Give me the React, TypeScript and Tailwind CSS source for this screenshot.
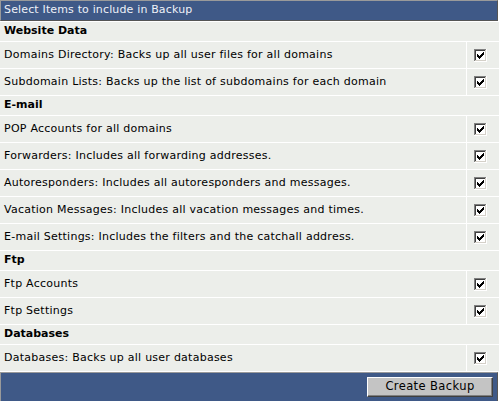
import React from 'react';

type Item = { label: string };
type Section = { title: string; items: Item[] };

const sections: Section[] = [
  {
    title: 'Website Data',
    items: [
      { label: 'Domains Directory: Backs up all user files for all domains' },
      { label: 'Subdomain Lists: Backs up the list of subdomains for each domain' },
    ],
  },
  {
    title: 'E-mail',
    items: [
      { label: 'POP Accounts for all domains' },
      { label: 'Forwarders: Includes all forwarding addresses.' },
      { label: 'Autoresponders: Includes all autoresponders and messages.' },
      { label: 'Vacation Messages: Includes all vacation messages and times.' },
      { label: 'E-mail Settings: Includes the filters and the catchall address.' },
    ],
  },
  {
    title: 'Ftp',
    items: [{ label: 'Ftp Accounts' }, { label: 'Ftp Settings' }],
  },
  {
    title: 'Databases',
    items: [{ label: 'Databases: Backs up all user databases' }],
  },
];

// classic sunken checkbox, 13x13
const CHECK = [
  [6],
  [5, 6],
  [0, 4, 5, 6],
  [0, 1, 3, 4, 5],
  [0, 1, 2, 3, 4],
  [1, 2, 3],
  [2],
];

const CheckBox = () => (
  <svg width="13" height="13" viewBox="0 0 13 13" shapeRendering="crispEdges">
    <rect x="0" y="0" width="13" height="13" fill="#ffffff" />
    <rect x="0" y="0" width="12" height="1" fill="#808080" />
    <rect x="0" y="0" width="1" height="12" fill="#808080" />
    <rect x="1" y="1" width="10" height="1" fill="#404040" />
    <rect x="1" y="1" width="1" height="10" fill="#404040" />
    <rect x="1" y="11" width="11" height="1" fill="#d4d0c8" />
    <rect x="11" y="1" width="1" height="11" fill="#d4d0c8" />
    {CHECK.map((cols, row) =>
      cols.map((col) => (
        <rect key={`${row}-${col}`} x={3 + col} y={3 + row} width="1" height="1" fill="#000000" />
      ))
    )}
  </svg>
);

const App = () => {
  return (
    <div className="w-[499px] h-[401px] bg-white flex flex-col gap-px text-[11px] text-black font-['DejaVu_Sans',Verdana,sans-serif]">
      <div className="h-[21px] flex items-center px-[3px] tracking-[0.15px] bg-[#3f5987] text-[#eef1f8] border-t border-l border-[#9a9a9a] border-r border-b border-r-[#555] border-b-[#555] mr-[1px]">
        Select Items to include in Backup
      </div>

      {sections.map((section) => (
        <React.Fragment key={section.title}>
          <div className="h-[19px] flex items-center px-[4px] bg-[#eceeea] font-bold">
            {section.title}
          </div>
          {section.items.map((item) => (
            <div key={item.label} className="h-[26px] flex gap-px">
              <div className="flex-1 flex items-center px-[4px] tracking-[0.25px] bg-[#eceeea]">
                {item.label}
              </div>
              <div className="w-[32px] flex items-center pl-[7px] bg-[#eceeea]">
                <CheckBox />
              </div>
            </div>
          ))}
        </React.Fragment>
      ))}

      <div className="flex-1 flex items-center justify-end pr-[4px] bg-[#3f5987] border-t border-l border-[#9a9a9a] border-r border-r-[#555] mr-[1px]">
        <button className="w-[126px] h-[20px] bg-[#c4c4c4] text-[11.5px] tracking-[0.4px] text-black border border-t-white border-l-white border-r-[#404040] border-b-[#404040] shadow-[inset_-1px_-1px_0_#808080]">
          Create Backup
        </button>
      </div>
    </div>
  );
};

export default App;
